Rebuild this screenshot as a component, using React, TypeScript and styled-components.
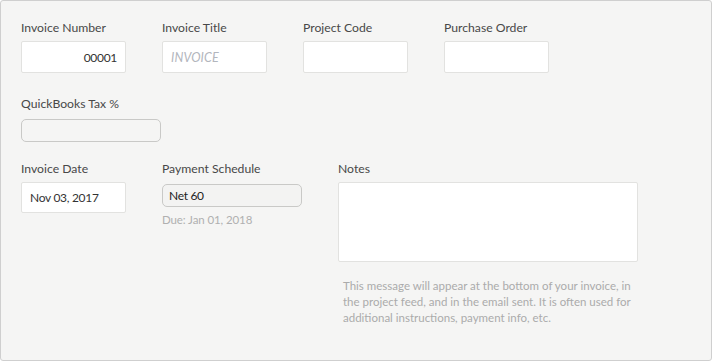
import React from "react";
import styled, { createGlobalStyle } from "styled-components";

const Global = createGlobalStyle`
  html, body { margin: 0; padding: 0; background: #ffffff; }
  body { font-family: "Lato", "Open Sans", sans-serif; }
  * { box-sizing: border-box; }
`;

const Panel = styled.div`
  width: 712px;
  height: 361px;
  background: #f5f5f4;
  border: 1px solid #cfcfcf;
  border-radius: 3px;
  padding: 19px 20px 0 20px;
  display: flex;
  flex-direction: column;
`;

const Row = styled.div<{ $mt?: number }>`
  display: flex;
  gap: 36px;
  align-items: flex-start;
  margin-top: ${(p) => p.$mt ?? 0}px;
`;

const Field = styled.div<{ $w: number }>`
  width: ${(p) => p.$w}px;
  display: flex;
  flex-direction: column;
`;

const Label = styled.label<{ $mb?: number }>`
  font-size: 12.2px;
  line-height: 16px;
  color: #484848;
  margin-bottom: ${(p) => p.$mb ?? 5}px;
  white-space: nowrap;
`;

const TextBox = styled.div<{ $align?: string; $h?: number }>`
  height: ${(p) => p.$h ?? 32}px;
  background: #ffffff;
  border: 1px solid #e2e2e0;
  border-radius: 2px;
  display: flex;
  align-items: center;
  justify-content: ${(p) => (p.$align === "right" ? "flex-end" : "flex-start")};
  padding: 0 8px;
  font-size: 12px;
  letter-spacing: -0.3px;
  color: #333333;
`;

const Placeholder = styled.span`
  font-style: italic;
  font-size: 12.5px;
  color: #b3b6bd;
  letter-spacing: 0.1px;
`;

const RoundBox = styled.div<{ $fill?: string; $mt?: number }>`
  height: 23px;
  margin-top: ${(p) => p.$mt ?? 0}px;
  background: ${(p) => p.$fill ?? "transparent"};
  border: 1px solid #c9c9c7;
  border-radius: 5px;
  display: flex;
  align-items: center;
  padding: 0 6px;
  font-size: 12px;
  letter-spacing: -0.3px;
  color: #222222;
`;

const Due = styled.div`
  margin-top: 6px;
  font-size: 11.5px;
  line-height: 14px;
  letter-spacing: -0.1px;
  color: #b0b0b0;
`;

const NotesBox = styled.div`
  height: 80px;
  background: #ffffff;
  border: 1px solid #e2e2e0;
  border-radius: 2px;
`;

const Help = styled.p`
  margin: 16px 0 0 5px;
  font-size: 11.5px;
  line-height: 16px;
  color: #ababab;
  width: 300px;
`;

export default function App() {
  return (
    <>
      <Global />
      <Panel>
        <Row>
          <Field $w={105}>
            <Label>Invoice Number</Label>
            <TextBox $align="right">00001</TextBox>
          </Field>
          <Field $w={105}>
            <Label>Invoice Title</Label>
            <TextBox>
              <Placeholder>INVOICE</Placeholder>
            </TextBox>
          </Field>
          <Field $w={105}>
            <Label>Project Code</Label>
            <TextBox />
          </Field>
          <Field $w={105}>
            <Label>Purchase Order</Label>
            <TextBox />
          </Field>
        </Row>
        <Row $mt={23}>
          <Field $w={140}>
            <Label $mb={7}>QuickBooks Tax %</Label>
            <RoundBox />
          </Field>
        </Row>
        <Row $mt={19}>
          <Field $w={105}>
            <Label>Invoice Date</Label>
            <TextBox $h={31}>Nov 03, 2017</TextBox>
          </Field>
          <Field $w={140}>
            <Label>Payment Schedule</Label>
            <RoundBox $fill="#f3f3f2" $mt={2}>Net 60</RoundBox>
            <Due>Due: Jan 01, 2018</Due>
          </Field>
          <Field $w={300}>
            <Label>Notes</Label>
            <NotesBox />
            <Help>
              This message will appear at the bottom of your invoice, in the project feed, and in the email sent. It is often used for additional instructions, payment info, etc.
            </Help>
          </Field>
        </Row>
      </Panel>
    </>
  );
}
